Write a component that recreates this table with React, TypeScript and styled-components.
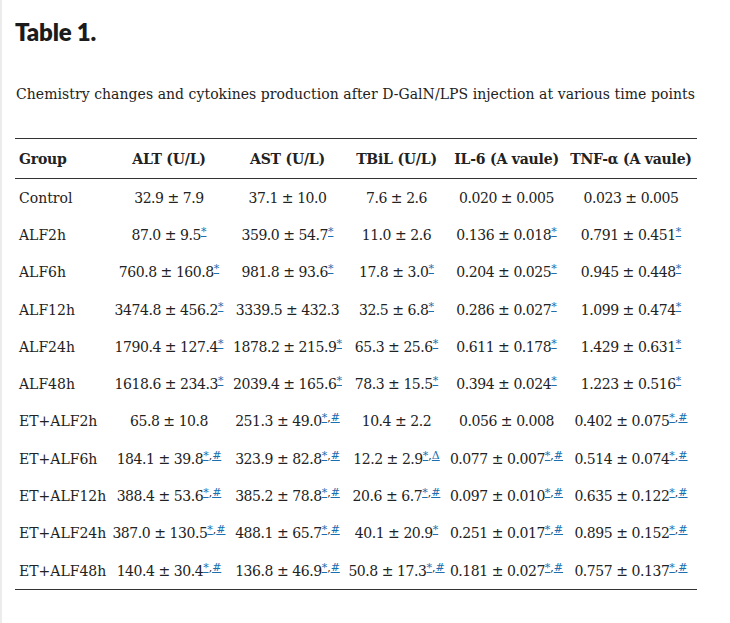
import React from "react";
import styled, { createGlobalStyle } from "styled-components";

const GlobalStyle = createGlobalStyle`
    html, body {
        margin : 0;
        padding : 0;
        background : #ffffff;
    }
`;

const Page = styled.div`
    width : 730px;
    height : 623px;
    box-sizing : border-box;
    border-left : solid 2px #ececec;
    padding : 17px 0 0 13px;
    color : #222222;
`;

const Title = styled.h3`
    margin : 0;
    font-family : Lato, "Noto Sans", sans-serif;
    font-weight : 800;
    font-size : 24px;
    line-height : 30px;
    letter-spacing : -0.2px;
    color : #1b1b1b;
`;

const Caption = styled.p`
    margin : 35px 0 0 1px;
    font-family : "DejaVu Serif", serif;
    font-size : 14px;
    line-height : 24px;
    letter-spacing : 0.05px;
    color : #222222;
`;

const TableBox = styled.table`
    margin-top : 32px;
    width : 682px;
    table-layout : fixed;
    border-collapse : collapse;
    font-family : "DejaVu Serif", serif;
    font-size : 14px;
    color : #222222;
    border-top : solid 1px #333333;
    border-bottom : solid 1px #333333;
`;

const Col = styled.col<{ $w: number }>`
    width : ${(p) => p.$w}px;
`;

const HeadCell = styled.th<{ $left?: boolean }>`
    height : 39px;
    padding : 0 0 0 ${(p) => (p.$left ? "4px" : "0")};
    text-align : ${(p) => (p.$left ? "left" : "center")};
    font-weight : 700;
    letter-spacing : -0.2px;
    white-space : nowrap;
    border-bottom : solid 1px #333333;
`;

const Cell = styled.td<{ $left?: boolean }>`
    height : 37.3px;
    padding : 0 0 0 ${(p) => (p.$left ? "4px" : "0")};
    text-align : ${(p) => (p.$left ? "left" : "center")};
    letter-spacing : ${(p) => (p.$left ? "0" : "-0.45px")};
    white-space : nowrap;
`;

const Sup = styled.sup`
    font-size : 11px;
    line-height : 0;
    letter-spacing : 0;
    vertical-align : 5px;
`;

const Mark = styled.a`
    color : #1a6fb0;
    text-decoration : underline;
`;

type Row = { group: string; cells: [string, string][] };

const widths = [93, 122, 115, 103, 117, 132];

const rows: Row[] = [
    { group: "Control", cells: [["32.9 ± 7.9", ""], ["37.1 ± 10.0", ""], ["7.6 ± 2.6", ""], ["0.020 ± 0.005", ""], ["0.023 ± 0.005", ""]] },
    { group: "ALF2h", cells: [["87.0 ± 9.5", "*"], ["359.0 ± 54.7", "*"], ["11.0 ± 2.6", ""], ["0.136 ± 0.018", "*"], ["0.791 ± 0.451", "*"]] },
    { group: "ALF6h", cells: [["760.8 ± 160.8", "*"], ["981.8 ± 93.6", "*"], ["17.8 ± 3.0", "*"], ["0.204 ± 0.025", "*"], ["0.945 ± 0.448", "*"]] },
    { group: "ALF12h", cells: [["3474.8 ± 456.2", "*"], ["3339.5 ± 432.3", ""], ["32.5 ± 6.8", "*"], ["0.286 ± 0.027", "*"], ["1.099 ± 0.474", "*"]] },
    { group: "ALF24h", cells: [["1790.4 ± 127.4", "*"], ["1878.2 ± 215.9", "*"], ["65.3 ± 25.6", "*"], ["0.611 ± 0.178", "*"], ["1.429 ± 0.631", "*"]] },
    { group: "ALF48h", cells: [["1618.6 ± 234.3", "*"], ["2039.4 ± 165.6", "*"], ["78.3 ± 15.5", "*"], ["0.394 ± 0.024", "*"], ["1.223 ± 0.516", "*"]] },
    { group: "ET+ALF2h", cells: [["65.8 ± 10.8", ""], ["251.3 ± 49.0", "*#"], ["10.4 ± 2.2", ""], ["0.056 ± 0.008", ""], ["0.402 ± 0.075", "*#"]] },
    { group: "ET+ALF6h", cells: [["184.1 ± 39.8", "*#"], ["323.9 ± 82.8", "*#"], ["12.2 ± 2.9", "*Δ"], ["0.077 ± 0.007", "*#"], ["0.514 ± 0.074", "*#"]] },
    { group: "ET+ALF12h", cells: [["388.4 ± 53.6", "*#"], ["385.2 ± 78.8", "*#"], ["20.6 ± 6.7", "*#"], ["0.097 ± 0.010", "*#"], ["0.635 ± 0.122", "*#"]] },
    { group: "ET+ALF24h", cells: [["387.0 ± 130.5", "*#"], ["488.1 ± 65.7", "*#"], ["40.1 ± 20.9", "*"], ["0.251 ± 0.017", "*#"], ["0.895 ± 0.152", "*#"]] },
    { group: "ET+ALF48h", cells: [["140.4 ± 30.4", "*#"], ["136.8 ± 46.9", "*#"], ["50.8 ± 17.3", "*#"], ["0.181 ± 0.027", "*#"], ["0.757 ± 0.137", "*#"]] },
];

const Marks = ({ code }: { code: string }) => {
    if (!code) return null;
    const parts = code.split("");
    return (
        <Sup>
            {parts.map((m, i) => (
                <React.Fragment key={i}>
                    {i > 0 && ","}
                    <Mark href="#">{m}</Mark>
                </React.Fragment>
            ))}
        </Sup>
    );
};

const App = () => {
    return (
        <Page>
            <GlobalStyle />
            <Title>Table 1.</Title>
            <Caption>Chemistry changes and cytokines production after D-GalN/LPS injection at various time points</Caption>
            <TableBox>
                <colgroup>
                    {widths.map((w, i) => (
                        <Col key={i} $w={w} />
                    ))}
                </colgroup>
                <thead>
                    <tr>
                        <HeadCell $left>Group</HeadCell>
                        <HeadCell>ALT (U/L)</HeadCell>
                        <HeadCell>AST (U/L)</HeadCell>
                        <HeadCell>TBiL (U/L)</HeadCell>
                        <HeadCell>IL-6 (A vaule)</HeadCell>
                        <HeadCell>TNF-α (A vaule)</HeadCell>
                    </tr>
                </thead>
                <tbody>
                    {rows.map((r) => (
                        <tr key={r.group}>
                            <Cell $left>{r.group}</Cell>
                            {r.cells.map(([v, m], i) => (
                                <Cell key={i}>
                                    {v}
                                    <Marks code={m} />
                                </Cell>
                            ))}
                        </tr>
                    ))}
                </tbody>
            </TableBox>
        </Page>
    );
};

export default App;
